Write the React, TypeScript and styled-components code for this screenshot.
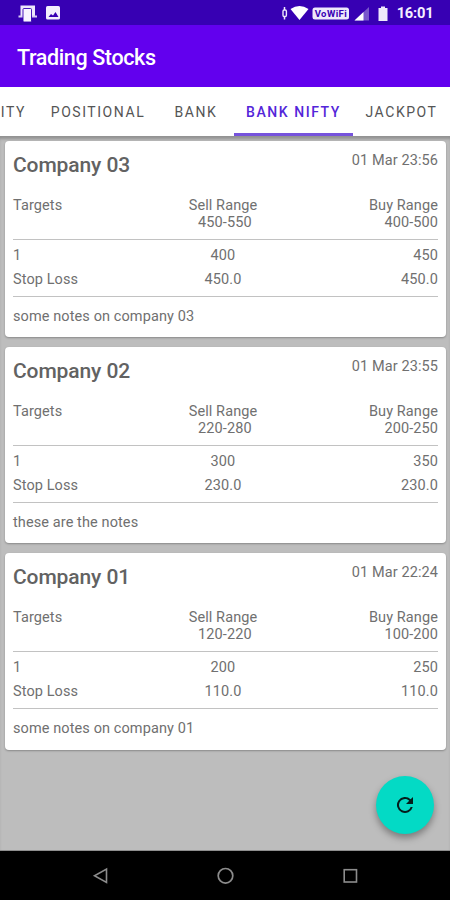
import React from "react";
import styled, { createGlobalStyle } from "styled-components";

const GlobalStyle = createGlobalStyle`
  * { box-sizing: border-box; }
  body { margin: 0; font-family: Roboto, "Liberation Sans", sans-serif; }
`;

const Screen = styled.div`
  width: 450px;
  height: 900px;
  display: flex;
  flex-direction: column;
  overflow: hidden;
  background: #bdbdbd;
`;

const StatusBar = styled.div`
  height: 25px;
  flex: none;
  display: flex;
  align-items: center;
  justify-content: space-between;
  padding: 1px 16.5px 0 18px;
  background: #3700b3;
  svg { display: block; }
`;

const Clock = styled.span`
  color: #f4efff;
  font-size: 14.7px;
  font-weight: 700;
  line-height: 24px;
  letter-spacing: -0.2px;
`;

const StatusGroup = styled.div`
  display: flex;
  align-items: center;
`;

const Toolbar = styled.header`
  height: 61.5px;
  flex: none;
  padding: 3px 17px 0;
  display: flex;
  align-items: center;
  background: #6200ee;
  color: #fff;
  font-size: 21.5px;
  font-weight: 500;
  letter-spacing: -0.38px;
`;

const TabBar = styled.nav`
  height: 49.5px;
  flex: none;
  display: flex;
  background: #fff;
`;

const Tab = styled.div<{ $width: number; $active?: boolean; $end?: boolean }>`
  width: ${(p) => p.$width}px;
  flex: none;
  display: flex;
  align-items: center;
  justify-content: ${(p) => (p.$end ? "flex-end" : "center")};
  padding: 2px ${(p) => (p.$end ? 12 : 0)}px 0 0;
  white-space: nowrap;
  overflow: hidden;
  font-size: 14px;
  font-weight: ${(p) => (p.$active ? 500 : 400)};
  letter-spacing: 1.55px;
  color: ${(p) => (p.$active ? "#5326d9" : "#555")};
  box-shadow: ${(p) => (p.$active ? "inset 0 -3px #7653dc" : "none")};
`;

const Content = styled.main`
  flex: 1;
  min-height: 0;
  display: flex;
  flex-direction: column;
  gap: 9.8px;
  padding: 4.8px 4px 0 4.6px;
  box-shadow: inset 0 4px 3px -1px #929292, inset 0 -1px #8e8e8e;
`;

const Card = styled.article`
  height: 196.4px;
  flex: none;
  padding: 0 8px 0 8.4px;
  border-radius: 4px;
  background: #fff;
  box-shadow: 0 1px 2px rgba(0, 0, 0, 0.28);
  color: #707070;
  font-size: 14.5px;
  letter-spacing: 0.1px;
`;

const CardHead = styled.div`
  height: 55px;
  padding-top: 10px;
  display: flex;
  justify-content: space-between;
`;

const CompanyName = styled.h2`
  margin: 0;
  font-size: 21px;
  line-height: 28px;
  font-weight: 500;
  letter-spacing: -0.1px;
  color: #626262;
`;

const DateText = styled.time`
  line-height: 19px;
`;

const Row = styled.div<{ $height: number; $line?: number }>`
  height: ${(p) => p.$height}px;
  display: grid;
  grid-template-columns: 140px 140px 1fr;
  line-height: ${(p) => p.$line ?? p.$height}px;
`;

const HeadRow = styled(Row)`
  padding-top: 0.9px;
`;

const Cell = styled.div<{ $align?: "center" | "right" }>`
  text-align: ${(p) => p.$align ?? "left"};
  white-space: pre;
`;

const Divider = styled.div`
  height: 1px;
  background: #c2c2c2;
`;

const Targets = styled.div`
  height: 56px;
  padding-top: 4.2px;
`;

const Notes = styled.p`
  margin: 0;
  line-height: 39px;
`;

const Fab = styled.button`
  position: absolute;
  left: 376px;
  top: 776px;
  width: 58px;
  height: 58px;
  padding: 0;
  border: 0;
  border-radius: 50%;
  display: flex;
  align-items: center;
  justify-content: center;
  background: #03dac5;
  box-shadow: 0 4px 7px rgba(0, 0, 0, 0.35);
`;

const NavBar = styled.footer`
  height: 49px;
  flex: none;
  display: grid;
  grid-template-columns: 125px 125px 125px;
  justify-content: center;
  align-items: center;
  justify-items: center;
  background: #000;
  svg { display: block; }
`;

const stocks = [
  { name: "Company 03", date: "01 Mar 23:56", sell: "450-550", buy: "400-500", target: ["400", "450"], stop: "450.0", notes: "some notes on company 03" },
  { name: "Company 02", date: "01 Mar 23:55", sell: "220-280", buy: "200-250", target: ["300", "350"], stop: "230.0", notes: "these are the notes" },
  { name: "Company 01", date: "01 Mar 22:24", sell: "120-220", buy: "100-200", target: ["200", "250"], stop: "110.0", notes: "some notes on company 01" },
];

type Stock = (typeof stocks)[number];

const StockCard = ({ stock }: { stock: Stock }) => (
  <Card>
    <CardHead>
      <CompanyName>{stock.name}</CompanyName>
      <DateText>{stock.date}</DateText>
    </CardHead>
    <HeadRow $height={43} $line={17}>
      <Cell>Targets</Cell>
      <Cell $align="center">{`Sell Range\n ${stock.sell}`}</Cell>
      <Cell $align="right">{`Buy Range\n${stock.buy}`}</Cell>
    </HeadRow>
    <Divider />
    <Targets>
      <Row $height={24}>
        <Cell>1</Cell>
        <Cell $align="center">{stock.target[0]}</Cell>
        <Cell $align="right">{stock.target[1]}</Cell>
      </Row>
      <Row $height={24}>
        <Cell>Stop Loss</Cell>
        <Cell $align="center">{stock.stop}</Cell>
        <Cell $align="right">{stock.stop}</Cell>
      </Row>
    </Targets>
    <Divider />
    <Notes>{stock.notes}</Notes>
  </Card>
);

const NotificationIcons = () => (
  <svg width="44" height="18" viewBox="0 0 44 18">
    <path d="M2.500 1.500h14.500v10.500H2.500z" fill="#eee8fb" />
    <path d="M0.500 12.500h5M14 12.500h5" stroke="#d9cdf5" strokeWidth="1.800" />
    <rect x="5" y="4.500" width="8.500" height="13.500" rx="1" fill="#f8f5ff" stroke="#3700b3" strokeWidth="0.900" />
    <rect x="28" y="2" width="14" height="13.500" rx="1.600" fill="#f3effd" />
    <path d="M30.500 13l2.500-3 2 1.500 2.500-3.500 3 5z" fill="#3700b3" />
  </svg>
);

const StatusIcons = () => (
  <svg width="116" height="18" viewBox="0 0 116 18">
    <path d="M3.500 3v12.500" stroke="#eee8fb" strokeWidth="1.500" />
    <rect x="2" y="6" width="3.400" height="6.500" rx="1.200" fill="#3700b3" stroke="#eee8fb" strokeWidth="1.400" />
    <path d="M9.500 5Q18.500 -1 27.500 5L18.500 16z" fill="#fff" />
    <rect x="31.500" y="3.500" width="36.500" height="12" rx="2.500" fill="#eee8fb" />
    <text x="49.700" y="13" fontSize="9.500" fontWeight="700" fontFamily="Roboto, sans-serif" textAnchor="middle" textLength="32" fill="#3700b3">VoWiFi</text>
    <path d="M88 3v13.500H73.500z" fill="#7958cc" />
    <path d="M82.500 8v8.500h-9z" fill="#fff" />
    <path d="M100 2.500h4v1.500h2.500V17h-9V4h2.500z" fill="#eee8fb" />
  </svg>
);

const RefreshIcon = () => (
  <svg width="24" height="24" viewBox="0 0 24 24">
    <path fill="#051d1b" d="M17.650 6.350A8 8 0 1 0 19.730 14h-2.080A6 6 0 1 1 12 6c1.660 0 3.140.69 4.220 1.780L13 11h7V4z" />
  </svg>
);

export default function App() {
  return (
    <Screen>
      <GlobalStyle />
      <StatusBar>
        <NotificationIcons />
        <StatusGroup>
          <StatusIcons />
          <Clock>16:01</Clock>
        </StatusGroup>
      </StatusBar>
      <Toolbar>Trading Stocks</Toolbar>
      <TabBar>
        <Tab $width={38} $end>ITY</Tab>
        <Tab $width={120}>POSITIONAL</Tab>
        <Tab $width={76}>BANK</Tab>
        <Tab $width={119} $active>BANK NIFTY</Tab>
        <Tab $width={97}>JACKPOT</Tab>
      </TabBar>
      <Content>
        {stocks.map((s) => (
          <StockCard key={s.name} stock={s} />
        ))}
      </Content>
      <NavBar>
        <svg width="20" height="20" viewBox="0 0 20 20">
          <path d="M16.500 3v13.500L4.500 9.800z" fill="none" stroke="#8c8c8c" strokeWidth="1.600" />
        </svg>
        <svg width="20" height="20" viewBox="0 0 20 20">
          <circle cx="10.500" cy="9.800" r="7.300" fill="none" stroke="#8c8c8c" strokeWidth="1.700" />
        </svg>
        <svg width="20" height="20" viewBox="0 0 20 20">
          <rect x="4.200" y="3.700" width="12.300" height="12.300" fill="none" stroke="#8c8c8c" strokeWidth="1.600" />
        </svg>
      </NavBar>
      <Fab aria-label="Refresh">
        <RefreshIcon />
      </Fab>
    </Screen>
  );
}
